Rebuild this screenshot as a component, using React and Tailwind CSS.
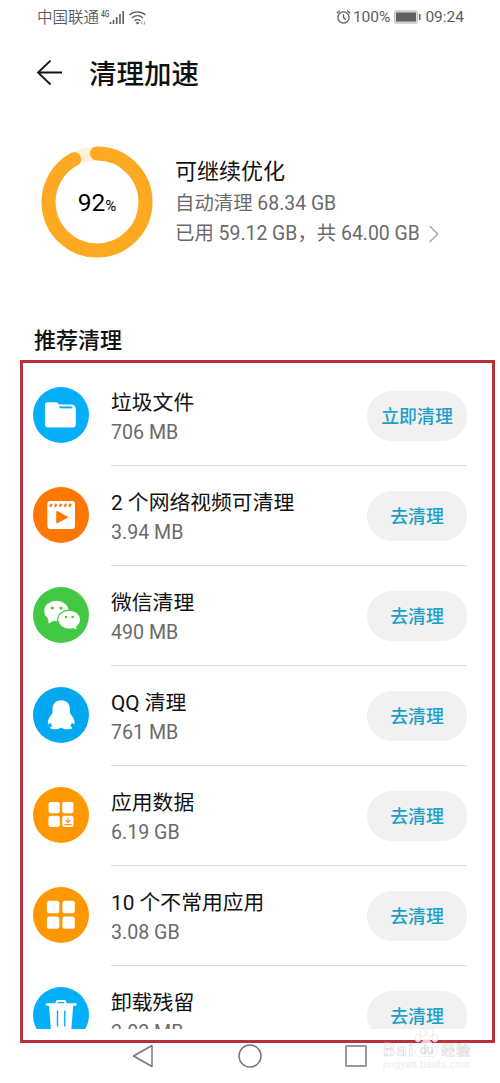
import { ChevronRight } from 'lucide-react'

const FONT = "font-['Roboto','Noto_Sans_CJK_SC',sans-serif]"

function FolderIcon() {
  return (
    <>
      <path
        d="M15 15.3h7.6c1.3 0 2 .5 2.8 1.4.6.6 1 .9 2 .9H38c2.8 0 4.8 2 4.8 4.8v15c0 1.8-1.2 3-3 3H15c-1.8 0-3-1.2-3-3V18.3c0-1.8 1.2-3 3-3z"
        fill="#fff"
      />
      <path d="M26.2 19.8h11c1 0 1.6.3 2.2 1.2H28.5c-1 0-1.6-.4-2.3-1.2z" fill="#04aef9" stroke="#04aef9" strokeWidth=".7" />
    </>
  )
}

function VideoIcon() {
  return (
    <>
      <rect x="14.3" y="14" width="27.7" height="28" rx="3" fill="#fff" />
      <path
        d="M18.6 16.8l-1.4 3M23.4 16.8l-1.4 3M28.2 16.8l-1.4 3M33 16.8l-1.4 3M37.8 16.8l-1.4 3"
        stroke="#ff7700"
        strokeWidth="2.2"
      />
      <path d="M24 24.8v10.8l10-5.4z" fill="#ff7700" stroke="#ff7700" strokeWidth="1.6" strokeLinejoin="round" />
    </>
  )
}

function WechatIcon() {
  return (
    <>
      <path d="M15 30l.6 6.4 6-3.2z" fill="#fff" />
      <ellipse cx="23.4" cy="24" rx="12.2" ry="10.2" fill="#fff" />
      <circle cx="19.3" cy="21" r="1.6" fill="#43c843" />
      <circle cx="28" cy="21" r="1.6" fill="#43c843" />
      <ellipse cx="36.2" cy="32.7" rx="12" ry="10.2" fill="#43c843" />
      <ellipse cx="36.2" cy="32.7" rx="10.9" ry="9" fill="#fff" />
      <path d="M38.5 40.5l5 2-.5-4.5z" fill="#fff" />
      <circle cx="33" cy="30" r="1.3" fill="#43c843" />
      <circle cx="39.6" cy="30" r="1.3" fill="#43c843" />
    </>
  )
}

function QQIcon() {
  return (
    <path
      d="M28.2 13.3c-5.5 0-8.7 3.9-8.7 8.8v3.6c-1.3 2.5-3.7 5-4.4 7.7-.5 1.9-.4 3.7.4 3.8.7.1 1.5-1 2-1.7.3 1.5.9 2.8 1.8 3.8-1.3.3-2.2.8-2 1.6.3 1.2 2.9 1.5 5.5 1.4 2.1-.1 3.7-.6 4.500-1.300h1.800c.8.7 2.400 1.200 4.500 1.300 2.600.1 5.200-.2 5.500-1.400.2-.8-.7-1.300-2-1.600.9-1 1.500-2.300 1.800-3.800.5.7 1.300 1.800 2 1.700.8-.1.9-1.900.4-3.800-.7-2.700-3.100-5.200-4.400-7.700v-3.600c0-4.900-3.200-8.800-8.700-8.800z"
      fill="#fff"
    />
  )
}

function AppDataIcon() {
  return (
    <>
      <rect x="15.5" y="15" width="11.3" height="11.3" rx="2.3" fill="#fff" />
      <rect x="29.2" y="15" width="11.3" height="11.3" rx="2.3" fill="#fff" />
      <rect x="15.5" y="28.7" width="11.3" height="11.3" rx="2.3" fill="#fff" />
      <rect x="29.2" y="28.7" width="11.3" height="11.3" rx="2.3" fill="#fff" />
      <path d="M34.9 30.6v4.4M32.6 33.2l2.3 2.3 2.3-2.3M31.2 37.7h7.4" fill="none" stroke="#f79a18" strokeWidth="1.2" />
    </>
  )
}

function AppsIcon() {
  return (
    <>
      <rect x="13.9" y="13.8" width="12.4" height="12.4" rx="2.5" fill="#fff" />
      <rect x="29.4" y="13.8" width="12.4" height="12.4" rx="2.5" fill="#fff" />
      <rect x="13.9" y="29.4" width="12.4" height="12.4" rx="2.5" fill="#fff" />
      <rect x="29.4" y="29.4" width="12.4" height="12.4" rx="2.5" fill="#fff" />
    </>
  )
}

function TrashIcon() {
  return (
    <>
      <path d="M23.2 16.5l1-2.6h7.6l1 2.6" fill="none" stroke="#fff" strokeWidth="2" strokeLinejoin="round" />
      <path d="M14 17.5h28.4" stroke="#fff" strokeWidth="2.4" strokeLinecap="round" />
      <path d="M16 18h24.2l-2 26H18z" fill="#fff" />
      <path d="M24.5 24v15M31.8 24v15" stroke="#04aef9" strokeWidth="1.4" strokeLinecap="round" />
    </>
  )
}

const ITEMS = [
  { title: '垃圾文件', size: '706 MB', action: '立即清理', bg: 'bg-[#04aef9]', Icon: FolderIcon },
  { title: '2 个网络视频可清理', size: '3.94 MB', action: '去清理', bg: 'bg-[#ff7700]', Icon: VideoIcon },
  { title: '微信清理', size: '490 MB', action: '去清理', bg: 'bg-[#43c843]', Icon: WechatIcon },
  { title: 'QQ 清理', size: '761 MB', action: '去清理', bg: 'bg-[#04a8f0]', Icon: QQIcon },
  { title: '应用数据', size: '6.19 GB', action: '去清理', bg: 'bg-[#ff9800]', Icon: AppDataIcon },
  { title: '10 个不常用应用', size: '3.08 GB', action: '去清理', bg: 'bg-[#ff9800]', Icon: AppsIcon },
  { title: '卸载残留', size: '2.02 MB', action: '去清理', bg: 'bg-[#04aef9]', Icon: TrashIcon },
]

function StatusBar() {
  return (
    <div className="flex h-[34px] items-center justify-between pl-[37px] pr-[36px] text-[15.5px] text-[#5c5c5c]">
      <div className="flex items-center">
        <span className="pt-[3px] font-[350]">中国联通</span>
        <svg className="ml-[1px]" width="48" height="18" viewBox="0 0 48 18" fill="none">
          <text x="1" y="8.5" fontSize="9" fontWeight="500" textLength="8.5" lengthAdjust="spacingAndGlyphs" fill="#5c5c5c">
            4G
          </text>
          <path d="M10.5 14v2M13.5 12v4M16.7 9v7M20 6v10M23.2 3v13" stroke="#5c5c5c" strokeWidth="1.6" />
          <path
            d="M29.5 7c4.600-4.200 11.400-4.200 16 0M32 10c3.300-3 7.700-3 11 0M34.600 12.900c1.800-1.600 4-1.600 5.800 0"
            stroke="#5c5c5c"
            strokeWidth="1.3"
          />
          <circle cx="37.5" cy="15" r="1.3" fill="#5c5c5c" />
          <path d="M43 13.5l-2 1.500 2 1.500M44.500 13.500v3" stroke="#8a8a8a" strokeWidth=".8" />
        </svg>
      </div>
      <div className="flex items-center">
        <svg width="15" height="16" viewBox="0 0 15 16" fill="none" stroke="#5c5c5c" strokeWidth="1.3">
          <circle cx="7.5" cy="8.5" r="5.6" />
          <path d="M7.5 5.3v3.4l2.3 2M.8 4.3l3-2.6M14.2 4.3l-3-2.6" />
        </svg>
        <span className="ml-[2px] pt-[2px]">100%</span>
        <svg className="ml-[4px]" width="27" height="14" viewBox="0 0 27 14">
          <rect x=".5" y=".9" width="23" height="12.2" rx="1.5" fill="#ddd" stroke="#bbb" />
          <rect x="2" y="2.5" width="20" height="9" fill="#5f5f5f" />
          <rect x="25" y="4" width="1.5" height="6" fill="#5f5f5f" />
        </svg>
        <span className="ml-[4px] pt-[2px]">09:24</span>
      </div>
    </div>
  )
}

function UsageRing() {
  return (
    <div className="grid h-[112px] w-[112px] place-items-center">
      <svg className="col-start-1 row-start-1 -rotate-90" width="112" height="112" viewBox="0 0 112 112" fill="none">
        <circle cx="56" cy="56" r="48.5" stroke="#fdf0da" strokeWidth="13.5" />
        <circle
          cx="56"
          cy="56"
          r="48.5"
          stroke="#fda921"
          strokeWidth="14"
          strokeLinecap="round"
          pathLength="100"
          strokeDasharray="92.2 100"
        />
      </svg>
      <div className="col-start-1 row-start-1 flex items-baseline pt-[2px] text-black">
        <span className="text-[24.5px] leading-none">92</span>
        <span className="text-[15px] leading-none">%</span>
      </div>
    </div>
  )
}

function ItemRow({ title, size, action, bg, Icon }) {
  return (
    <li className="flex h-[100px] shrink-0 pl-[10px] pr-[25px]">
      <div className={`mt-[21px] h-14 w-14 shrink-0 rounded-full ${bg}`}>
        <svg width="56" height="56" viewBox="0 0 56 56">
          <Icon />
        </svg>
      </div>
      <div className="ml-[22px] flex flex-1 items-center justify-between border-b border-[#dcdcdc]">
        <div className="pt-[5px]">
          <p className="text-[20.8px] leading-[30px] text-[#111]">{title}</p>
          <p className="text-[19.6px] leading-[30px] text-[#6a6a6a]">{size}</p>
        </div>
        <button type="button" className="h-[50px] w-[100px] rounded-full bg-[#f1f1f1] pt-[4px] text-[17.9px] font-medium text-[#1b9fc9]">
          {action}
        </button>
      </div>
    </li>
  )
}

function Watermark() {
  return (
    <div className="absolute right-[28px] top-[1028px] w-[90px]">
      <svg width="90" height="44" viewBox="0 0 90 44">
        <g fill="#fff" fillOpacity=".75" stroke="#e2e2e2" strokeWidth=".6">
          <ellipse cx="36" cy="10" rx="3" ry="4" />
          <ellipse cx="41" cy="4.5" rx="3" ry="4" />
          <ellipse cx="48" cy="4.5" rx="3" ry="4" />
          <ellipse cx="53" cy="10" rx="3" ry="4" />
          <path d="M44.5 11c-4 0-5.5 5-9 8-4 4-2 10 3 10 3 0 4-.6 6-.6s3 .6 6 .6c5 0 7-6 3-10-3.500-3-5-8-9-8z" />
        </g>
        <g fill="#fff" stroke="#dadada" strokeWidth=".6">
          <text x="1" y="28" fontSize="19" fontWeight="500" textLength="30">Bai</text>
          <text x="38" y="26" fontSize="12">du</text>
          <text x="59" y="27" fontSize="14" fontWeight="500" textLength="29">经验</text>
        </g>
        <text x="1" y="40" fontSize="10" fill="#ececec" textLength="87">jingyan.baidu.com</text>
      </svg>
    </div>
  )
}

export default function App() {
  return (
    <div className={`relative flex h-[1083px] w-[500px] flex-col overflow-hidden bg-white ${FONT}`}>
      <StatusBar />

      <header className="flex h-[78px] items-center pl-[36px]">
        <svg width="27" height="26" viewBox="0 0 27 26" fill="none" stroke="#151515" strokeWidth="1.8">
          <path d="M26 12.5H2M14.5.5L2 12.5l12.5 12" />
        </svg>
        <h1 className="ml-[26px] pt-[4px] text-[27.5px] font-medium leading-none text-[#111]">清理加速</h1>
      </header>

      <section className="mt-[33px] flex h-[114px] items-center pl-[41px]">
        <UsageRing />
        <div className="ml-[22px]">
          <p className="text-[22px] leading-[32px] text-[#111]">可继续优化</p>
          <p className="pt-[1px] text-[19.4px] leading-[30px] text-[#6a6a6a]">自动清理 68.34 GB</p>
          <div className="flex items-center text-[19.4px] leading-[30px] text-[#6a6a6a]">
            <span>已用 59.12 GB，共 64.00 GB</span>
            <ChevronRight className="-ml-[1px]" size={30} strokeWidth={1.3} color="#aaa" />
          </div>
        </div>
      </section>

      <h2 className="mt-[66px] h-[35px] pl-[34px] text-[22px] font-medium leading-[32px] text-[#111]">推荐清理</h2>

      <div className="ml-[20px] h-[683px] w-[475px] shrink-0 border-[3px] border-[#b9303b]">
        <ul className="flex h-[666px] flex-col overflow-hidden pt-[3px]">
          {ITEMS.map((item) => (
            <ItemRow key={item.title} {...item} />
          ))}
        </ul>
      </div>

      <nav className="flex h-[26px] items-center">
        <svg className="ml-[131px]" width="24" height="26" viewBox="0 0 24 26" fill="none" stroke="#777" strokeWidth="1.5" strokeLinejoin="round">
          <path d="M21 2.5v21L2.5 13z" />
        </svg>
        <svg className="ml-[82px]" width="26" height="26" viewBox="0 0 26 26" fill="none" stroke="#777" strokeWidth="1.5">
          <circle cx="13" cy="13" r="11" />
        </svg>
        <svg className="ml-[81px]" width="24" height="26" viewBox="0 0 24 26" fill="none" stroke="#777" strokeWidth="1.5">
          <rect x="2" y="3" width="20" height="20" rx=".5" />
        </svg>
      </nav>

      <Watermark />
    </div>
  )
}
